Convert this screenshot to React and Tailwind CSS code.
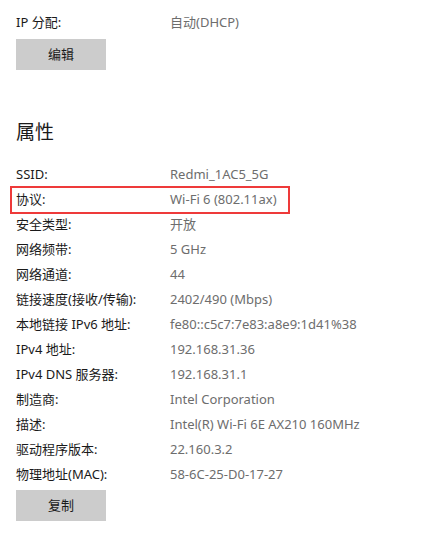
const font = { fontFamily: '"Noto Sans", "Noto Sans CJK SC", sans-serif' };

const props = [
  ["SSID:", "Redmi_1AC5_5G"],
  ["协议:", "Wi-Fi 6 (802.11ax)", true],
  ["安全类型:", "开放"],
  ["网络频带:", "5 GHz"],
  ["网络通道:", "44"],
  ["链接速度(接收/传输):", "2402/490 (Mbps)"],
  ["本地链接 IPv6 地址:", "fe80::c5c7:7e83:a8e9:1d41%38"],
  ["IPv4 地址:", "192.168.31.36"],
  ["IPv4 DNS 服务器:", "192.168.31.1"],
  ["制造商:", "Intel Corporation"],
  ["描述:", "Intel(R) Wi-Fi 6E AX210 160MHz"],
  ["驱动程序版本:", "22.160.3.2"],
  ["物理地址(MAC):", "58-6C-25-D0-17-27"],
];

function Row({ label, value, highlight }) {
  return (
    <div className="relative flex items-center h-[25px] text-[13px]">
      <span className="w-[154px] shrink-0 text-[#1a1a1a]">{label}</span>
      <span className="text-[#6d6d6d] whitespace-nowrap">{value}</span>
      {highlight && (
        <div className="absolute left-[-6px] top-[-2px] w-[280px] h-[28px] border-2 border-[#ee3a3a]" />
      )}
    </div>
  );
}

function Btn({ children }) {
  return (
    <button className="w-[90px] h-[31px] bg-[#cccccc] text-[13px] text-[#1a1a1a]">{children}</button>
  );
}

export default function App() {
  return (
    <div className="w-[441px] h-[534px] bg-white overflow-hidden pl-4 pt-[10.5px]" style={font}>
      <Row label="IP 分配:" value="自动(DHCP)" />
      <div className="mt-[3.5px]">
        <Btn>编辑</Btn>
      </div>
      <h2 className="h-[40px] mt-[42px] flex items-center text-[19px] text-[#1a1a1a]">属性</h2>
      <div className="mt-[10.5px]">
        {props.map(([l, v, h]) => (
          <Row key={l} label={l} value={v} highlight={h} />
        ))}
      </div>
      <div className="mt-[2.5px]">
        <Btn>复制</Btn>
      </div>
    </div>
  );
}
